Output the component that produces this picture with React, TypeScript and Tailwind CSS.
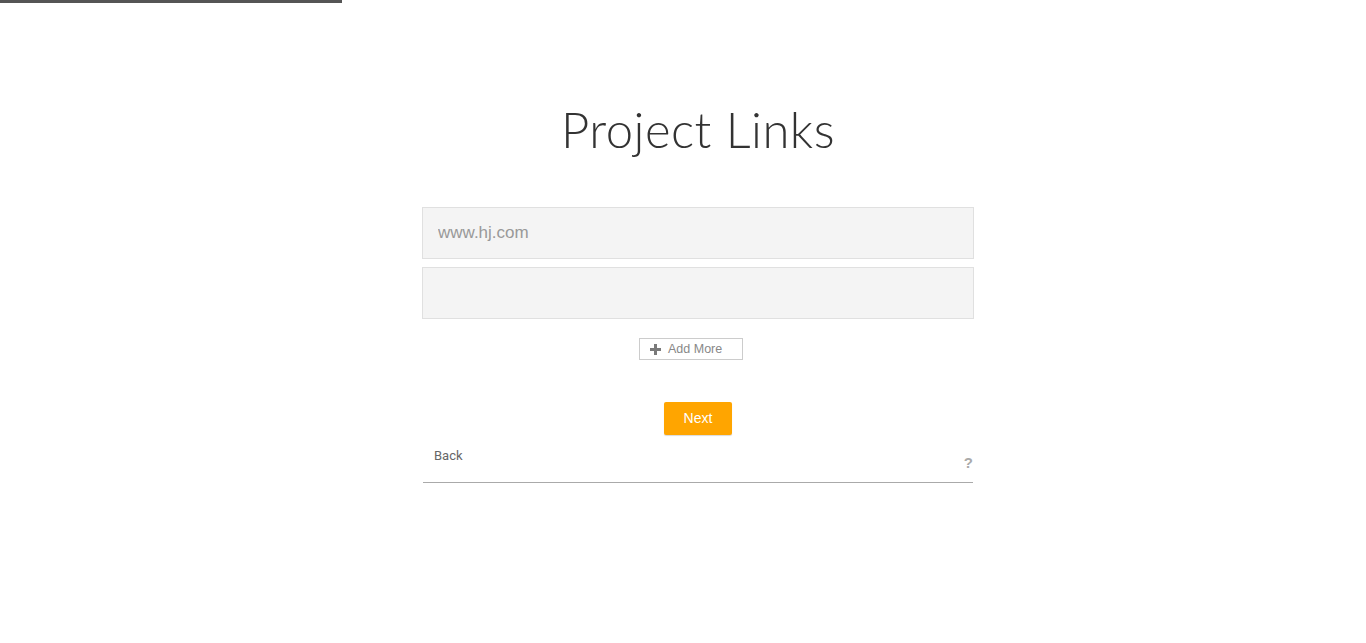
import React, { useState } from "react";

const App = () => {
    const [links, setLinks] = useState(["", ""]);

    return (
        <div className="min-h-[643px] w-full bg-white" style={{ fontFamily: "Arial, 'Liberation Sans', sans-serif" }}>
            {/* progress */}
            <div className="h-[3px] w-[342px] bg-[#555555]" />

            <div className="flex justify-center pl-[30px]">
                <div className="flex w-[552px] flex-col items-center">
                    <h1 className="mt-[94px] font-['Lato'] text-[49px] font-light leading-[64px] tracking-[0.5px] text-[#333333]">
                        Project Links
                    </h1>

                    <div className="mt-[46px] flex w-full flex-col gap-[8px]">
                        {links.map((v, i) => (
                            <input
                                key={i}
                                type="text"
                                value={v}
                                onChange={(e) => {
                                    const next = [...links];
                                    next[i] = e.target.value;
                                    setLinks(next);
                                }}
                                placeholder={i === 0 ? "www.hj.com" : ""}
                                className="h-[52px] w-full border border-[#e0e0e0] bg-[#f4f4f4] px-[15px] font-['Liberation_Sans'] text-[17px] text-[#555] outline-none placeholder:text-[#999999]"
                            />
                        ))}
                    </div>

                    <button
                        type="button"
                        onClick={() => setLinks([...links, ""])}
                        className="mt-[19px] mr-[14px] flex h-[22px] w-[104px] items-center justify-start gap-[7px] border border-[#cccccc] bg-white pl-[10px] font-['Liberation_Sans'] text-[12.5px] text-[#888888]"
                    >
                        <svg width="11" height="11" viewBox="0 0 11 11">
                            <path d="M4 0h3v4h4v3H7v4H4V7H0V4h4z" fill="#7a7a7a" />
                        </svg>
                        Add More
                    </button>

                    <button
                        type="button"
                        className="mt-[42px] h-[33px] w-[68px] rounded-[2px] bg-[#ffa500] font-['Liberation_Sans'] text-[14px] text-white shadow-[0_1px_1px_rgba(0,0,0,0.15)]"
                    >
                        Next
                    </button>

                    <div className="mt-[10px] flex h-[38px] w-[550px] items-start justify-between border-b border-[#aaaaaa]">
                        <span className="mt-[1px] pl-[11px] font-['Roboto'] text-[13px] text-[#666666]">Back</span>
                        <span className="mt-[7px] font-['Liberation_Sans'] text-[15px] font-bold text-[#aaaaaa]">?</span>
                    </div>
                </div>
            </div>
        </div>
    );
};

export default App;
